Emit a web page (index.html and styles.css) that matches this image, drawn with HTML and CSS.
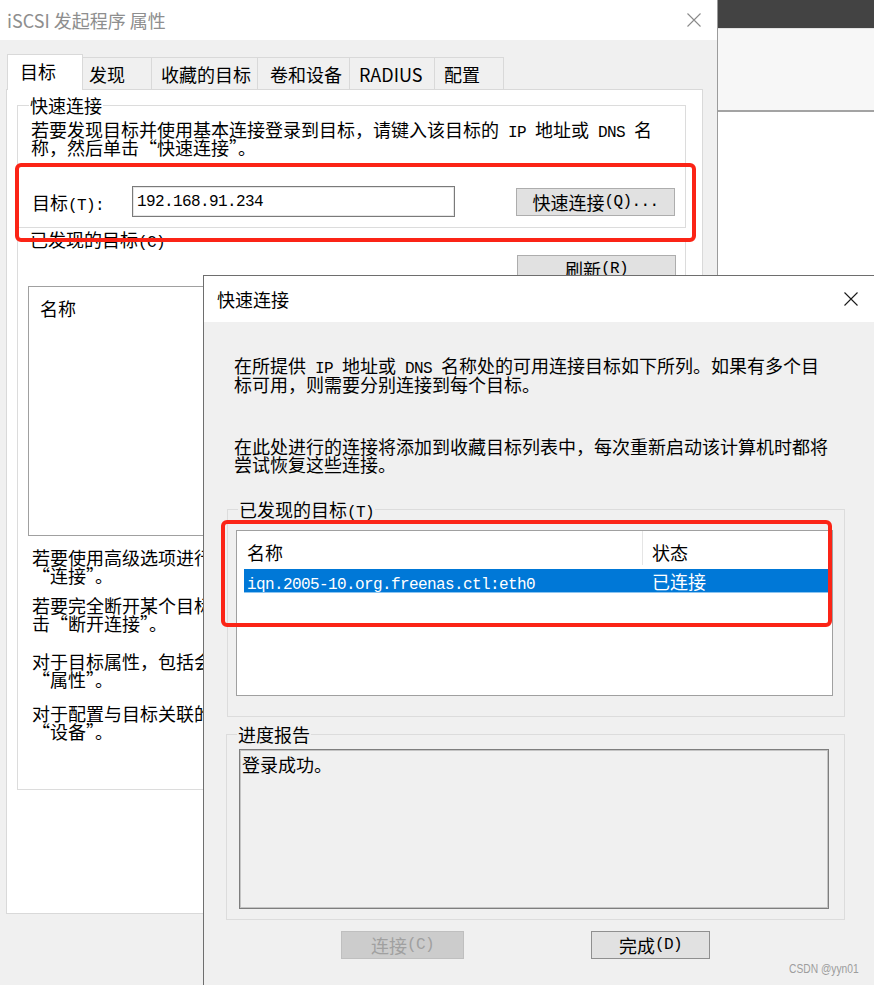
FILE: index.html
```html
<!DOCTYPE html>
<html lang="zh-CN">
<head>
<meta charset="utf-8">
<title>iSCSI 发起程序 属性</title>
<link rel="stylesheet" href="styles.css">
</head>
<body>
<div class="desktop">
  <section class="win main">
    <header class="main-title">
      <span class="title-text">iSCSI 发起程序 属性</span>
      <svg class="close" width="14" height="14" viewBox="0 0 14 14"><path d="M0.5 0.5L13.5 13.5M13.5 0.5L0.5 13.5" stroke="#8a8a8a" stroke-width="1.1" fill="none"/></svg>
    </header>
    <nav class="tabs">
      <div class="tab t1 active">目标</div>
      <div class="tab t2">发现</div>
      <div class="tab t3">收藏的目标</div>
      <div class="tab t4">卷和设备</div>
      <div class="tab t5">RADIUS</div>
      <div class="tab t6">配置</div>
    </nav>
    <div class="tabpanel">
      <fieldset class="group g-quick">
        <legend>快速连接</legend>
        <p class="desc">若要发现目标并使用基本连接登录到目标，请键入该目标的<span class="hw"> IP </span>地址或<span class="hw"> DNS </span>名<br>称，然后单击“快速连接”。</p>
        <div class="qrow">
          <label class="qlabel">目标<span class="hw">(T):</span></label>
          <div class="input"><span class="hw">192.168.91.234</span></div>
          <div class="btn qbtn">快速连接<span class="hw">(Q)...</span></div>
        </div>
      </fieldset>
      <fieldset class="group g-found">
        <legend>已发现的目标<span class="hw">(C)</span></legend>
        <div class="refresh-row"><div class="btn rbtn">刷新<span class="hw">(R)</span></div></div>
        <div class="listbox"><div class="lb-head">名称</div></div>
        <p class="note n1">若要使用高级选项进行<br>“连接”。</p>
        <p class="note n2">若要完全断开某个目标<br>击“断开连接”。</p>
        <p class="note n3">对于目标属性，包括会<br>“属性”。</p>
        <p class="note n4">对于配置与目标关联的<br>“设备”。</p>
      </fieldset>
    </div>
  </section>

  <aside class="side">
    <div class="side-dark"></div>
    <div class="side-light"></div>
  </aside>

  <section class="win dlg">
    <header class="dlg-title">
      <span class="dlg-title-text">快速连接</span>
      <svg class="close" width="14" height="14" viewBox="0 0 14 14"><path d="M0.5 0.5L13.5 13.5M13.5 0.5L0.5 13.5" stroke="#1a1a1a" stroke-width="1.1" fill="none"/></svg>
    </header>
    <div class="dlg-body">
      <p class="para p1">在所提供<span class="hw"> IP </span>地址或<span class="hw"> DNS </span>名称处的可用连接目标如下所列。如果有多个目<br>标可用，则需要分别连接到每个目标。</p>
      <p class="para p2">在此处进行的连接将添加到收藏目标列表中，每次重新启动该计算机时都将<br>尝试恢复这些连接。</p>
      <fieldset class="group g-found2">
        <legend>已发现的目标<span class="hw">(T)</span></legend>
        <div class="listview">
          <div class="lv-head">
            <div class="lv-hcell c1">名称</div>
            <div class="lv-hcell c2">状态</div>
          </div>
          <div class="lv-row selected">
            <div class="lv-cell c1"><span class="hw">iqn.2005-10.org.freenas.ctl:eth0</span></div>
            <div class="lv-cell c2">已连接</div>
          </div>
        </div>
      </fieldset>
      <fieldset class="group g-progress">
        <legend>进度报告</legend>
        <div class="report">登录成功。</div>
      </fieldset>
      <div class="dlg-buttons">
        <div class="btn disabled b-connect">连接<span class="hw">(C)</span></div>
        <div class="btn b-done">完成<span class="hw">(D)</span></div>
      </div>
    </div>
  </section>

  <div class="mark m1"></div>
  <div class="mark m2"></div>
  <div class="watermark">CSDN @yyn01</div>
</div>
</body>
</html>
```

FILE: styles.css
```css
* { box-sizing: border-box; }
html, body { margin: 0; padding: 0; }
body {
  width: 874px;
  height: 985px;
  overflow: hidden;
  background: #fff;
  font-family: "Noto Sans CJK SC", "Noto Sans", sans-serif;
  font-size: 18px;
  line-height: 18px;
  color: #000;
}
p { margin: 0; }

.hw {
  font-family: "Liberation Mono", monospace;
  font-size: 16px;
  letter-spacing: -0.6px;
  line-height: 0;
}

.desktop {
  position: relative;
  display: flex;
  width: 874px;
  height: 985px;
  overflow: hidden;
}

/* ---------- main properties window ---------- */
.main {
  width: 717px;
  height: 985px;
  flex: none;
  display: flex;
  flex-direction: column;
  background: #f0f0f0;
}
.main-title {
  height: 40px;
  flex: none;
  background: #fff;
  display: flex;
  align-items: center;
  justify-content: space-between;
  padding: 0 16px 0 7px;
}
.title-text { color: #8e8e8e; }
.close { display: block; }

.tabs {
  position: relative;
  z-index: 1;
  display: flex;
  align-items: flex-end;
  height: 35px;
  margin-top: 14px;
  padding-left: 7px;
  flex: none;
}
.tab {
  height: 32px;
  border: 1px solid #d9d9d9;
  border-bottom: none;
  margin-left: -1px;
  background: #f0f0f0;
  display: flex;
  align-items: center;
  white-space: nowrap;
}
.tab.active {
  height: 36px;
  margin-left: 0;
  margin-bottom: -1px;
  background: #fff;
  padding-bottom: 3px;
}
.t1 { width: 76px; padding-left: 12px; }
.t2 { width: 70px; padding-left: 6px; }
.t3 { width: 107px; padding-left: 9px; }
.t4 { width: 93px; padding-left: 12px; }
.t5 { width: 86px; padding-left: 9px; }
.t6 { width: 70px; padding-left: 9px; }

.tabpanel {
  margin-left: 6px;
  width: 697px;
  height: 825px;
  border: 1px solid #d9d9d9;
  background: #fff;
  flex: none;
}

/* group boxes */
.group {
  margin: 0;
  padding: 0;
  min-width: 0;
  border: 1px solid #dcdcdc;
}
.group legend {
  padding: 0 1px;
  margin-left: 11px;
  line-height: 18px;
}

.g-quick { margin: 6px 0 0 10px; width: 669px; }
.desc { margin: 6px 0 0 13px; white-space: nowrap; }
.qrow {
  display: flex;
  align-items: center;
  height: 31px;
  margin: 30px 0 10px 0;
  padding-left: 14px;
}
.qlabel { width: 100px; flex: none; }
.input {
  width: 323px;
  height: 31px;
  flex: none;
  border: 1px solid #7a7a7a;
  box-shadow: inset 0 0 0 1px #e6e6e6;
  background: #fff;
  display: flex;
  align-items: center;
  padding-left: 4px;
}
.btn {
  height: 28px;
  flex: none;
  background: #e1e1e1;
  border: 1px solid #adadad;
  display: flex;
  align-items: center;
  justify-content: center;
  white-space: nowrap;
}
.qbtn { width: 159px; margin-left: 61px; }

.g-found { margin: 2px 0 0 10px; width: 669px; padding-bottom: 49px; }
.refresh-row {
  display: flex;
  justify-content: flex-end;
  padding-right: 9px;
  margin-top: 7px;
}
.rbtn { width: 159px; }
.listbox {
  margin: 3px 0 0 10px;
  width: 647px;
  height: 250px;
  border: 1px solid #a0a0a0;
  background: #fff;
}
.lb-head { padding: 12px 0 0 11px; }
.note { margin-left: 14px; white-space: nowrap; }
.n1 { margin-top: 12px; }
.n2 { margin-top: 12px; }
.n3 { margin-top: 20px; }
.n4 { margin-top: 16px; }

/* ---------- desktop strip at right ---------- */
.side {
  flex: 1;
  border-left: 1px solid #9b9b9b;
  background: #fff;
  display: flex;
  flex-direction: column;
}
.side-dark { height: 28px; background: #434343; }
.side-light {
  height: 84px;
  background: #f7f7f7;
  border-top: 1px solid #e2e2e2;
  border-bottom: 2px solid #a3a3a3;
}

/* ---------- quick connect dialog ---------- */
.dlg {
  position: absolute;
  left: 203px;
  top: 275px;
  width: 690px;
  height: 740px;
  border: 1px solid #6e6e6e;
  background: #f0f0f0;
}
.dlg-title {
  height: 46px;
  background: #fff;
  display: flex;
  align-items: center;
  justify-content: space-between;
  padding: 0 34px 0 13px;
}
.dlg-body { display: flex; flex-direction: column; align-items: flex-start; }
.para { margin-left: 30px; white-space: nowrap; }
.p1 { margin-top: 34px; line-height: 19px; }
.p2 { margin-top: 43px; }

.g-found2 { margin: 27px 0 0 23px; width: 618px; padding-bottom: 20px; }
.g-found2 legend, .g-progress legend { margin-left: 10px; }
.listview {
  margin: 12px 0 0 8px;
  width: 597px;
  height: 166px;
  border: 1px solid #a0a0a0;
  background: #fff;
}
.lv-head {
  display: grid;
  grid-template-columns: 406px 1fr;
  height: 34px;
}
.lv-hcell { padding-top: 12px; }
.lv-hcell.c1 { padding-left: 10px; border-right: 1px solid #e5e5e5; }
.lv-hcell.c2 { padding-left: 9px; }
.lv-row {
  display: grid;
  grid-template-columns: 399px 1fr;
  height: 24px;
  margin: 4px 0 0 7px;
  align-items: center;
}
.lv-row.selected {
  background: #0078d7;
  color: #fff;
  border-bottom: 1px solid #8cc4f0;
}
.lv-cell.c1 { padding-left: 3px; }
.lv-cell.c2 { padding-left: 9px; }

.g-progress { margin: 8px 0 0 22px; width: 619px; padding-bottom: 10px; }
.report {
  margin: 6px 0 0 12px;
  width: 590px;
  height: 160px;
  border: 1px solid #7e7e7e;
  box-shadow: inset 0 0 0 1px #c4c4c4;
  background: #f0f0f0;
  padding: 5px 0 0 2px;
}

.dlg-buttons { display: flex; margin: 11px 0 0 137px; }
.b-connect { width: 123px; }
.b-done { width: 119px; margin-left: 127px; border-color: #8f8f8f; }
.btn.disabled {
  background: #cccccc;
  border-color: #bfbfbf;
  color: #a0a0a0;
}

/* ---------- annotations ---------- */
.mark {
  position: absolute;
  border: 4px solid #fb2416;
  border-radius: 6px;
  pointer-events: none;
}
.m1 { left: 15px; top: 163px; width: 681px; height: 79px; }
.m2 { left: 221px; top: 520px; width: 611px; height: 107px; }

.watermark {
  position: absolute;
  left: 789px;
  top: 962px;
  font-family: "Liberation Sans", sans-serif;
  font-size: 12.5px;
  line-height: 14px;
  color: #9d9d9d;
  transform: scaleX(0.82);
  transform-origin: left center;
}
```
